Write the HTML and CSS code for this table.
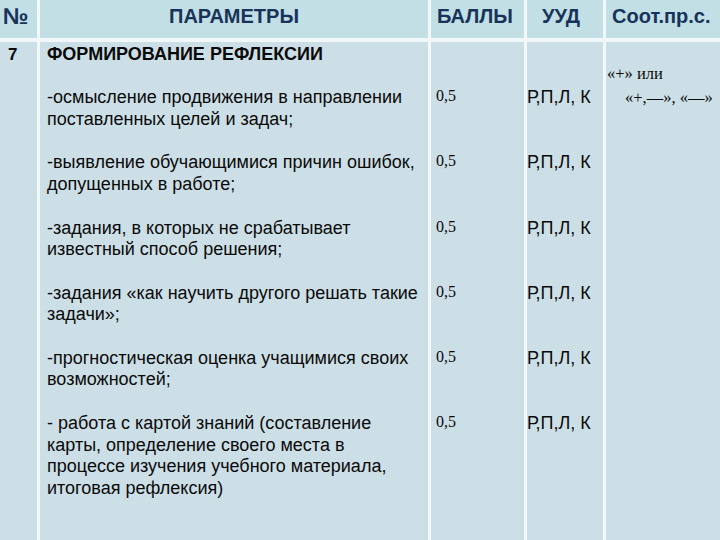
FILE: index.html
```html
<!DOCTYPE html>
<html lang="ru">
<head>
<meta charset="utf-8">
<title>Рефлексия</title>
<link rel="stylesheet" href="styles.css">
</head>
<body>
<div class="sheet">
  <div class="head">
    <div class="hcell hnum">№</div>
    <div class="hcell hcenter">ПАРАМЕТРЫ</div>
    <div class="hcell">БАЛЛЫ</div>
    <div class="hcell hpad">УУД</div>
    <div class="hcell">Соот.пр.с.</div>
  </div>
  <div class="body">
    <div class="num">7</div>
    <div class="cell title">ФОРМИРОВАНИЕ РЕФЛЕКСИИ</div>
    <div class="cell top"></div>
    <div class="cell top"></div>
    <div class="conf">
      <div class="c1">«+» или</div>
      <div class="c2">«+,—», «—»</div>
    </div>

    <div class="cell item">-осмысление продвижения в направлении<br>поставленных целей и задач;</div>
    <div class="cell score">0,5</div>
    <div class="cell uud">Р,П,Л, К</div>

    <div class="cell item">-выявление обучающимися причин ошибок,<br>допущенных в работе;</div>
    <div class="cell score">0,5</div>
    <div class="cell uud">Р,П,Л, К</div>

    <div class="cell item">-задания, в которых не срабатывает<br>известный способ решения;</div>
    <div class="cell score">0,5</div>
    <div class="cell uud">Р,П,Л, К</div>

    <div class="cell item">-задания «как научить другого решать такие<br>задачи»;</div>
    <div class="cell score">0,5</div>
    <div class="cell uud">Р,П,Л, К</div>

    <div class="cell item">-прогностическая оценка учащимися своих<br>возможностей;</div>
    <div class="cell score">0,5</div>
    <div class="cell uud">Р,П,Л, К</div>

    <div class="cell item">- работа с картой знаний (составление<br>карты, определение своего места в<br>процессе изучения учебного материала,<br>итоговая рефлексия)</div>
    <div class="cell score">0,5</div>
    <div class="cell uud">Р,П,Л, К</div>

    <div class="cell fill"></div>
    <div class="cell fill"></div>
    <div class="cell fill"></div>
  </div>
</div>
</body>
</html>
```
FILE: styles.css
```css
html, body {
  margin: 0;
  padding: 0;
  width: 720px;
  height: 540px;
  overflow: hidden;
  background: #f2f8fa;
}
.sheet {
  width: 720px;
  height: 540px;
  display: flex;
  flex-direction: column;
  font-family: "Liberation Sans", Arial, sans-serif;
  background: #f2f8fa;
}
.head {
  display: grid;
  grid-template-columns: 37px 388px 93px 76px 1fr;
  column-gap: 3px;
  height: 38px;
  margin-bottom: 4px;
}
.hcell {
  background: #c1dfe4;
  color: #18335a;
  font-weight: bold;
  font-size: 20px;
  line-height: 22px;
  padding: 5px 0 0 6px;
  white-space: nowrap;
}
.hnum {
  font-size: 23px;
  padding-left: 3px;
}
.hcenter {
  text-align: center;
  padding-left: 0;
}
.hpad {
  padding-left: 15px;
}
.body {
  flex: 1;
  display: grid;
  grid-template-columns: 37px 388px 93px 76px 1fr;
  grid-template-rows: auto auto auto auto auto auto auto 1fr;
  column-gap: 3px;
  font-size: 18px;
  line-height: 21.7px;
  color: #0a0a0a;
}
.num {
  grid-column: 1;
  grid-row: 1 / -1;
  background: #cddfe6;
  padding: 2px 0 0 8px;
  font-size: 17px;
  font-weight: bold;
}
.conf {
  grid-column: 5;
  grid-row: 1 / -1;
  background: #cddfe6;
  font-family: "Liberation Serif", "Times New Roman", serif;
  font-size: 16.5px;
  line-height: 24px;
  padding: 20px 0 0 1px;
}
.c2 {
  padding-left: 18px;
}
.cell {
  background: #cddfe6;
}
.title {
  font-weight: bold;
  height: 43.4px;
  padding: 2px 0 0 7px;
}
.top {
  padding-top: 2px;
}
.item {
  padding: 0 2px 21.7px 7px;
}
.score {
  font-family: "Liberation Serif", "Times New Roman", serif;
  font-size: 16px;
  line-height: 18px;
  padding: 0 0 0 5px;
}
.uud {
  padding-left: 0;
}
.fill {
  min-height: 0;
}
```
